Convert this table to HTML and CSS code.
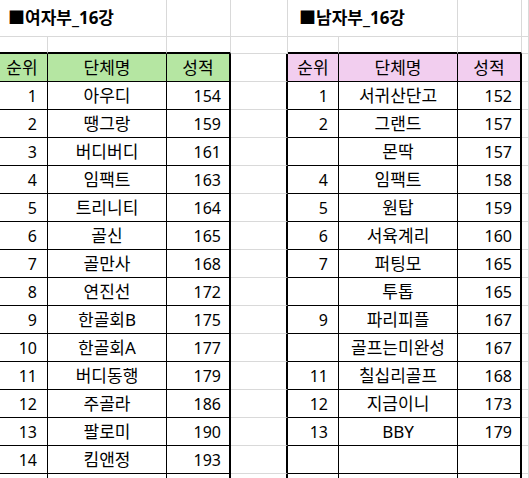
FILE: index.html
```html
<!DOCTYPE html>
<html lang="ko">
<head>
<meta charset="utf-8">
<title>16강</title>
<link rel="stylesheet" href="styles.css">
</head>
<body>
<div class="sheet">
  <!-- row 1: titles -->
  <div class="cell title span2">■여자부_16강</div>
  <div class="cell"></div>
  <div class="cell"></div>
  <div class="cell title span2">■남자부_16강</div>
  <div class="cell"></div>
  <div class="cell"></div>

  <!-- row 2: spacer above tables -->
  <div class="cell cap"></div>
  <div class="cell cap"></div>
  <div class="cell cap"></div>
  <div class="cell"></div>
  <div class="cell cap"></div>
  <div class="cell cap"></div>
  <div class="cell cap"></div>
  <div class="cell"></div>

  <!-- header -->
  <div class="cell t head green">순위</div>
  <div class="cell t head green">단체명</div>
  <div class="cell t t-end head green">성적</div>
  <div class="cell gap"></div>
  <div class="cell t head pink">순위</div>
  <div class="cell t head pink">단체명</div>
  <div class="cell t t-end head pink">성적</div>
  <div class="cell"></div>

  <div class="cell t rank">1</div><div class="cell t team">아우디</div><div class="cell t t-end score">154</div><div class="cell gap"></div>
  <div class="cell t rank">1</div><div class="cell t team">서귀산단고</div><div class="cell t t-end score">152</div><div class="cell"></div>

  <div class="cell t rank">2</div><div class="cell t team">땡그랑</div><div class="cell t t-end score">159</div><div class="cell gap"></div>
  <div class="cell t rank">2</div><div class="cell t team">그랜드</div><div class="cell t t-end score">157</div><div class="cell"></div>

  <div class="cell t rank">3</div><div class="cell t team">버디버디</div><div class="cell t t-end score">161</div><div class="cell gap"></div>
  <div class="cell t rank"></div><div class="cell t team">몬딱</div><div class="cell t t-end score">157</div><div class="cell"></div>

  <div class="cell t rank">4</div><div class="cell t team">임팩트</div><div class="cell t t-end score">163</div><div class="cell gap"></div>
  <div class="cell t rank">4</div><div class="cell t team">임팩트</div><div class="cell t t-end score">158</div><div class="cell"></div>

  <div class="cell t rank">5</div><div class="cell t team">트리니티</div><div class="cell t t-end score">164</div><div class="cell gap"></div>
  <div class="cell t rank">5</div><div class="cell t team">원탑</div><div class="cell t t-end score">159</div><div class="cell"></div>

  <div class="cell t rank">6</div><div class="cell t team">골신</div><div class="cell t t-end score">165</div><div class="cell gap"></div>
  <div class="cell t rank">6</div><div class="cell t team">서육계리</div><div class="cell t t-end score">160</div><div class="cell"></div>

  <div class="cell t rank">7</div><div class="cell t team">골만사</div><div class="cell t t-end score">168</div><div class="cell gap"></div>
  <div class="cell t rank">7</div><div class="cell t team">퍼팅모</div><div class="cell t t-end score">165</div><div class="cell"></div>

  <div class="cell t rank">8</div><div class="cell t team">연진선</div><div class="cell t t-end score">172</div><div class="cell gap"></div>
  <div class="cell t rank"></div><div class="cell t team">투톱</div><div class="cell t t-end score">165</div><div class="cell"></div>

  <div class="cell t rank">9</div><div class="cell t team">한골회B</div><div class="cell t t-end score">175</div><div class="cell gap"></div>
  <div class="cell t rank">9</div><div class="cell t team">파리피플</div><div class="cell t t-end score">167</div><div class="cell"></div>

  <div class="cell t rank">10</div><div class="cell t team">한골회A</div><div class="cell t t-end score">177</div><div class="cell gap"></div>
  <div class="cell t rank"></div><div class="cell t team">골프는미완성</div><div class="cell t t-end score">167</div><div class="cell"></div>

  <div class="cell t rank">11</div><div class="cell t team">버디동행</div><div class="cell t t-end score">179</div><div class="cell gap"></div>
  <div class="cell t rank">11</div><div class="cell t team">칠십리골프</div><div class="cell t t-end score">168</div><div class="cell"></div>

  <div class="cell t rank">12</div><div class="cell t team">주골라</div><div class="cell t t-end score">186</div><div class="cell gap"></div>
  <div class="cell t rank">12</div><div class="cell t team">지금이니</div><div class="cell t t-end score">173</div><div class="cell"></div>

  <div class="cell t rank">13</div><div class="cell t team">팔로미</div><div class="cell t t-end score">190</div><div class="cell gap"></div>
  <div class="cell t rank">13</div><div class="cell t team">BBY</div><div class="cell t t-end score">179</div><div class="cell"></div>

  <div class="cell t rank">14</div><div class="cell t team">킴앤정</div><div class="cell t t-end score">193</div><div class="cell gap"></div>
  <div class="cell t rank"></div><div class="cell t team"></div><div class="cell t t-end score"></div><div class="cell"></div>

  <div class="cell t rank"></div><div class="cell t team"></div><div class="cell t t-end score"></div><div class="cell gap"></div>
  <div class="cell t rank"></div><div class="cell t team"></div><div class="cell t t-end score"></div><div class="cell"></div>
</div>
</body>
</html>
```

FILE: styles.css
```css
html, body {
  margin: 0;
  padding: 0;
  background: #ffffff;
  overflow: hidden;
}

.sheet {
  margin-left: -3px;
  display: grid;
  grid-template-columns: 51px 119px 64px 57px 51px 119px 64px 1fr;
  grid-template-rows: 37px 17px repeat(16, 28px);
  font-family: "Noto Sans", "Noto Sans CJK KR", sans-serif;
  font-size: 16px;
  line-height: 20px;
  color: #000;
}

.cell {
  box-sizing: border-box;
  border-right: 1px solid #d9d9d9;
  border-bottom: 1px solid #d9d9d9;
  display: flex;
  align-items: center;
  min-width: 0;
  overflow: hidden;
  white-space: nowrap;
}

.span2 {
  grid-column: span 2;
}

.title {
  font-size: 17px;
  font-weight: 700;
  padding-left: 11px;
  padding-bottom: 1px;
}

.cap {
  border-bottom: 2px solid #000;
}

.t {
  border-right-color: #000;
  border-bottom-color: #000;
}

.t-end {
  border-right-width: 2px;
}

.gap {
  border-right: 2px solid #000;
}

.head {
  justify-content: center;
  font-size: 17px;
}

.green {
  background: #b5e6a2;
}

.pink {
  background: #f2ceef;
}

.rank {
  justify-content: flex-end;
  padding-right: 10px;
}

.team {
  justify-content: center;
  font-size: 17px;
}

.score {
  justify-content: flex-end;
  padding-right: 8px;
}
```
